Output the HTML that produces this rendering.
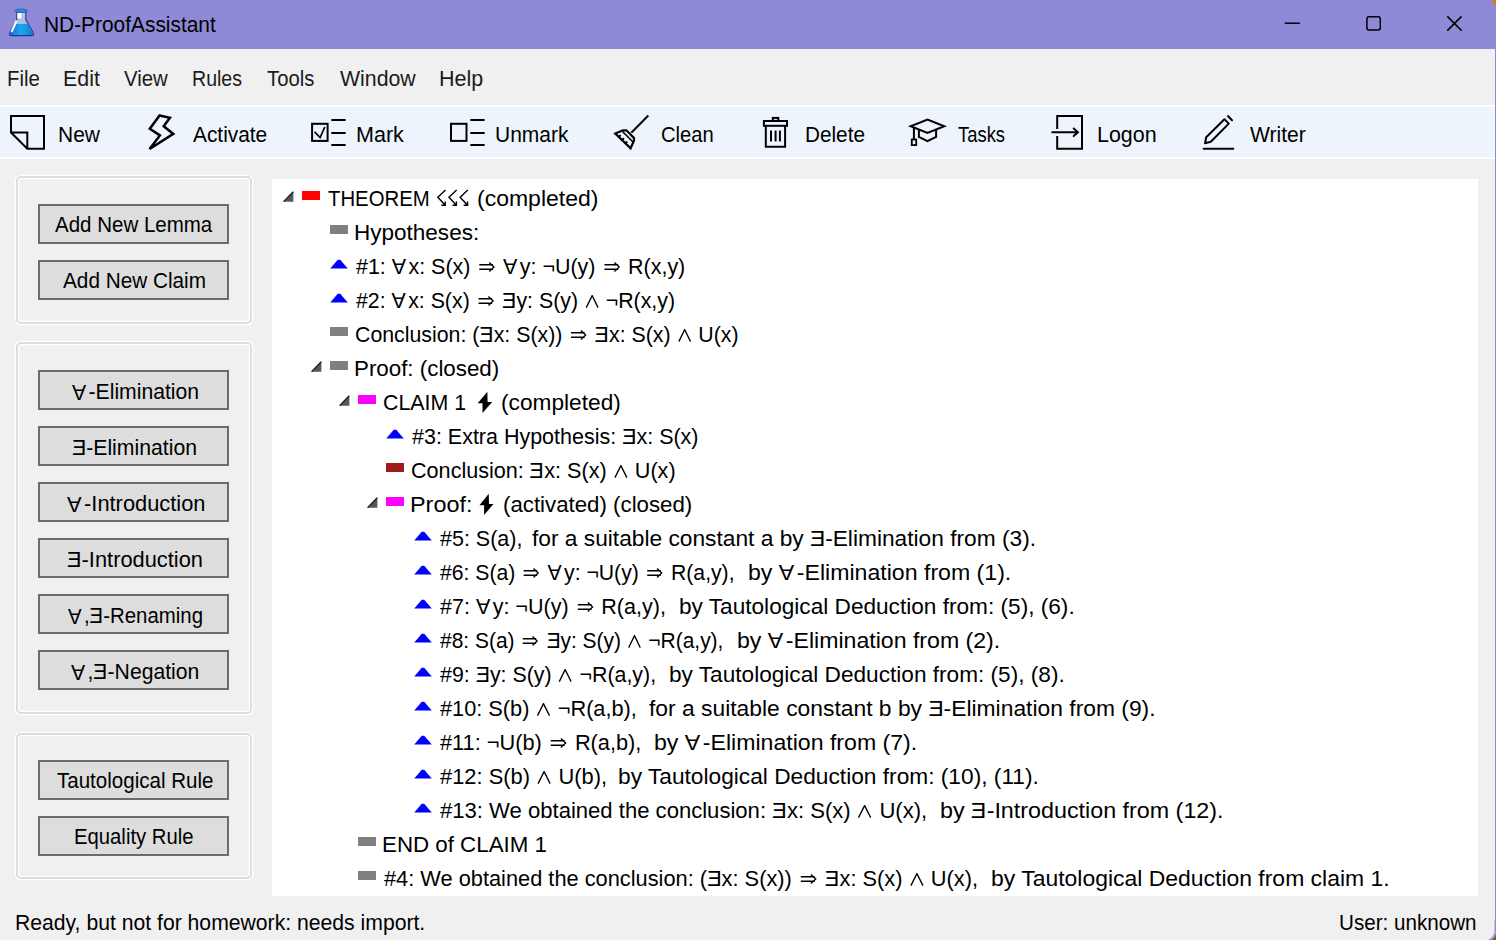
<!DOCTYPE html><html><head><meta charset="utf-8"><style>
html,body{margin:0;padding:0;background:#f0f0f0}
body{width:1496px;height:940px;overflow:hidden;position:relative;background:#f0f0f0;font-family:"Liberation Sans",sans-serif;color:#000}
.ab{position:absolute;display:block}
.tx{position:absolute;white-space:pre;transform-origin:0 0;font-family:"Liberation Sans",sans-serif}
.fa{display:inline-block;transform:scaleY(-1);margin-right:2.5px}
.fe{display:inline-block;transform:scaleX(-1)}
.im{vertical-align:0;display:inline-block}
.wg{vertical-align:0;display:inline-block}
.bz{vertical-align:-3px;display:inline-block}
.tz{vertical-align:-1px;display:inline-block}
.gb{position:absolute;box-sizing:border-box;border:2px solid #d5dfe5;border-radius:5px;box-shadow:0 0 0 1.3px #fff, inset 0 0 0 1.3px #fff}
.btn{position:absolute;left:38px;width:191px;height:40px;box-sizing:border-box;border:2px solid #6b6b6b;background:#dddddd}
</style></head><body>
<div class="ab" style="left:0;top:0;width:1496px;height:48.8px;background:#8e8ad8"></div>
<svg class="ab" style="left:4px;top:4px" width="36" height="36" viewBox="0 0 36 36">
<defs><linearGradient id="lq" x1="0" y1="0" x2="1" y2="0"><stop offset="0" stop-color="#1f6fd6"/><stop offset="0.5" stop-color="#18a8ec"/><stop offset="1" stop-color="#1a73d4"/></linearGradient>
<linearGradient id="gl" x1="0" y1="0" x2="0" y2="1"><stop offset="0" stop-color="#b8c4e8"/><stop offset="1" stop-color="#9fb0dc"/></linearGradient></defs>
<path d="M12.8 8H21.8V15.5L29.2 28.8Q30.4 31.6 27.5 31.6H7.5Q4.6 31.6 5.8 28.8L12.8 15.5Z" fill="url(#gl)" stroke="#23349a" stroke-width="1.1"/>
<path d="M10.4 20H24.2L29 28.9Q30 31 27.5 31H7.5Q5 31 6 28.9Z" fill="url(#lq)"/>
<ellipse cx="17.3" cy="6.7" rx="6.3" ry="1.7" fill="#2d8ad8" stroke="#1f5cb8" stroke-width="0.8"/>
<rect x="13.4" y="9" width="4" height="5.5" fill="#fff"/>
<path d="M12.6 16.5L7.6 27.8" stroke="#fff" stroke-width="2"/>
</svg>
<svg class="ab" style="left:1270px;top:0" width="226" height="48" viewBox="0 0 226 48">
<path d="M14.7 23.2H29.9" stroke="#000" stroke-width="1.5"/>
<rect x="96.9" y="16.7" width="13.4" height="13.3" rx="2.2" fill="none" stroke="#000" stroke-width="1.5"/>
<path d="M177.3 16.4L191.6 30.6M191.6 16.4L177.3 30.6" stroke="#000" stroke-width="1.5"/>
</svg>
<div class="ab" style="left:1494.6px;top:48px;width:1.4px;height:872px;background:#8e8ad8"></div>
<svg class="ab" style="left:1486px;top:0" width="10" height="10" viewBox="0 0 10 10"><path d="M5.5 0H10V5.5Z" fill="#e0741c"/></svg>
<svg class="ab" style="left:1476px;top:920px" width="20" height="20" viewBox="0 0 20 20"><path d="M20 11Q20 17.5 14.5 20H20Z" fill="#8a4a3a"/><path d="M19.3 0V10.5Q19.3 17 13 20" fill="none" stroke="#8e8ad8" stroke-width="1.4"/></svg>
<div class="ab" style="left:0;top:104.6px;width:1494.6px;height:54.4px;background:#fff"></div>
<div class="ab" style="left:0;top:107px;width:1494.6px;height:50.4px;background:#eef4fc"></div>
<svg class="ab" style="left:0;top:107px" width="1300" height="51" viewBox="0 107 1300 51">
<g fill="none" stroke="#000" stroke-width="2">
<path d="M11 116H44V148.8H27.3L11 132.5Z M11 132.5H27.3V148.8"/>
<path d="M159.6 115.5L169.9 117.7L163.7 126.3L173.3 133.9L149.6 149L159.9 135.4L149.8 128.7Z" stroke-width="2.5" stroke-linejoin="miter"/>
<rect x="312.1" y="123.8" width="15.5" height="17.1"/>
<path d="M314.6 131.8L320.1 137.6L324.8 127" stroke-width="1.7"/>
<path d="M332 120H345M332 133H345M332 145H345" stroke-width="1.8" stroke-linecap="round"/>
<rect x="451" y="123.8" width="15.5" height="17.1"/>
<path d="M471 120H484M471 133H484M471 145H484" stroke-width="1.8" stroke-linecap="round"/>
<path d="M631.3 132.7L648.3 115.5" stroke-width="2"/>
<path d="M615.3 133.6L623 130.3H626.3L634 138V140.6L630.6 148.3Z" stroke-width="2.2" stroke-linejoin="miter"/>
<path d="M622.5 131.5L633 142" stroke-width="1.6"/>
<path d="M618.6 137.2L620.6 135.1M621.9 140.4L623.9 138.3M625.2 143.6L627.2 141.5" stroke-width="2"/>
<rect x="763.9" y="121" width="23.1" height="4.8"/>
<rect x="772.8" y="117.9" width="5.5" height="3"/>
<path d="M765.8 125.8V146.8H785.1V125.8"/>
<path d="M771 130.5V141.5M775.6 130.5V141.5M779.9 130.5V141.5" stroke-width="2"/>
<path d="M910.7 126.3L927.5 119.6L944.3 126.3L927.5 132.9Z" stroke-linejoin="miter"/>
<path d="M918.9 129.6V136.8L927.5 141.1L936.1 136.8V129.6"/>
<path d="M913.9 127V139"/>
<rect x="911.8" y="139.5" width="4.4" height="5.6" stroke-width="1.8"/>
<path d="M1057.2 128.9V116H1082V148.7H1057.2V136.1"/>
<path d="M1052.2 132.3H1077.5M1073.7 128.5L1077.9 132.3L1073.7 136.1" stroke-linecap="round"/>
<path d="M1205 143.3L1206.2 137.2L1224.4 119.2L1228.8 123.6L1210.8 141.8Z" stroke-linejoin="round"/>
<path d="M1228 116L1232 120.2" stroke-linecap="round"/>
<path d="M1203.6 148.8H1233.3" stroke-linecap="round"/>
</g></svg>
<div class="gb" style="left:16px;top:176px;width:236px;height:147.5px"></div>
<div class="gb" style="left:16px;top:342.3px;width:236px;height:371.7px"></div>
<div class="gb" style="left:16px;top:732.6px;width:236px;height:146.2px"></div>
<div class="btn" style="top:204px"></div>
<div class="btn" style="top:260px"></div>
<div class="btn" style="top:370px"></div>
<div class="btn" style="top:426px"></div>
<div class="btn" style="top:482px"></div>
<div class="btn" style="top:538px"></div>
<div class="btn" style="top:594px"></div>
<div class="btn" style="top:650px"></div>
<div class="btn" style="top:760px"></div>
<div class="btn" style="top:816px"></div>
<div class="ab" style="left:271.8px;top:178.9px;width:1206px;height:716.8px;background:#fff"></div>
<svg class="ab" style="left:282px;top:189.9px" width="12" height="12" viewBox="0 0 12 12"><path d="M1.3 11.8L11.4 1.5V11.8Z" fill="#585858"/><path d="M1.6 11.6L11.2 1.8" stroke="#1c1c1c" stroke-width="1.3"/></svg>
<div class="ab" style="left:302px;top:191.0px;width:18px;height:9px;background:#ff0000"></div>
<div class="ab" style="left:330px;top:225.0px;width:18px;height:9px;background:#808080"></div>
<svg class="ab" style="left:330px;top:259.0px" width="18" height="10" viewBox="0 0 18 10"><path d="M0.2 9.4L7.8 0.8H10.2L17.8 9.4Z" fill="#0000ff"/></svg>
<svg class="ab" style="left:330px;top:293.0px" width="18" height="10" viewBox="0 0 18 10"><path d="M0.2 9.4L7.8 0.8H10.2L17.8 9.4Z" fill="#0000ff"/></svg>
<div class="ab" style="left:330px;top:327.0px;width:18px;height:9px;background:#808080"></div>
<svg class="ab" style="left:310px;top:359.9px" width="12" height="12" viewBox="0 0 12 12"><path d="M1.3 11.8L11.4 1.5V11.8Z" fill="#585858"/><path d="M1.6 11.6L11.2 1.8" stroke="#1c1c1c" stroke-width="1.3"/></svg>
<div class="ab" style="left:330px;top:361.0px;width:18px;height:9px;background:#808080"></div>
<svg class="ab" style="left:338px;top:393.9px" width="12" height="12" viewBox="0 0 12 12"><path d="M1.3 11.8L11.4 1.5V11.8Z" fill="#585858"/><path d="M1.6 11.6L11.2 1.8" stroke="#1c1c1c" stroke-width="1.3"/></svg>
<div class="ab" style="left:358px;top:395.0px;width:18px;height:9px;background:#ff00ff"></div>
<svg class="ab" style="left:386px;top:429.0px" width="18" height="10" viewBox="0 0 18 10"><path d="M0.2 9.4L7.8 0.8H10.2L17.8 9.4Z" fill="#0000ff"/></svg>
<div class="ab" style="left:386px;top:463.0px;width:18px;height:9px;background:#a31a1a"></div>
<svg class="ab" style="left:366px;top:495.9px" width="12" height="12" viewBox="0 0 12 12"><path d="M1.3 11.8L11.4 1.5V11.8Z" fill="#585858"/><path d="M1.6 11.6L11.2 1.8" stroke="#1c1c1c" stroke-width="1.3"/></svg>
<div class="ab" style="left:386px;top:497.0px;width:18px;height:9px;background:#ff00ff"></div>
<svg class="ab" style="left:414px;top:531.0px" width="18" height="10" viewBox="0 0 18 10"><path d="M0.2 9.4L7.8 0.8H10.2L17.8 9.4Z" fill="#0000ff"/></svg>
<svg class="ab" style="left:414px;top:565.0px" width="18" height="10" viewBox="0 0 18 10"><path d="M0.2 9.4L7.8 0.8H10.2L17.8 9.4Z" fill="#0000ff"/></svg>
<svg class="ab" style="left:414px;top:599.0px" width="18" height="10" viewBox="0 0 18 10"><path d="M0.2 9.4L7.8 0.8H10.2L17.8 9.4Z" fill="#0000ff"/></svg>
<svg class="ab" style="left:414px;top:633.0px" width="18" height="10" viewBox="0 0 18 10"><path d="M0.2 9.4L7.8 0.8H10.2L17.8 9.4Z" fill="#0000ff"/></svg>
<svg class="ab" style="left:414px;top:667.0px" width="18" height="10" viewBox="0 0 18 10"><path d="M0.2 9.4L7.8 0.8H10.2L17.8 9.4Z" fill="#0000ff"/></svg>
<svg class="ab" style="left:414px;top:701.0px" width="18" height="10" viewBox="0 0 18 10"><path d="M0.2 9.4L7.8 0.8H10.2L17.8 9.4Z" fill="#0000ff"/></svg>
<svg class="ab" style="left:414px;top:735.0px" width="18" height="10" viewBox="0 0 18 10"><path d="M0.2 9.4L7.8 0.8H10.2L17.8 9.4Z" fill="#0000ff"/></svg>
<svg class="ab" style="left:414px;top:769.0px" width="18" height="10" viewBox="0 0 18 10"><path d="M0.2 9.4L7.8 0.8H10.2L17.8 9.4Z" fill="#0000ff"/></svg>
<svg class="ab" style="left:414px;top:803.0px" width="18" height="10" viewBox="0 0 18 10"><path d="M0.2 9.4L7.8 0.8H10.2L17.8 9.4Z" fill="#0000ff"/></svg>
<div class="ab" style="left:358px;top:837.0px;width:18px;height:9px;background:#808080"></div>
<div class="ab" style="left:358px;top:871.0px;width:18px;height:9px;background:#808080"></div>
<div class="tx" id="title" style="left:43.72px;top:14.80px;font-size:21.5px;line-height:21.5px;color:#000;transform:scaleX(0.9713)">ND-ProofAssistant</div>
<div class="tx" id="m0" style="left:6.59px;top:68.18px;font-size:22px;line-height:22px;color:#1b1b1b;transform:scaleX(0.9244)">File</div>
<div class="tx" id="m1" style="left:62.55px;top:68.18px;font-size:22px;line-height:22px;color:#1b1b1b;transform:scaleX(0.9726)">Edit</div>
<div class="tx" id="m2" style="left:124.31px;top:68.18px;font-size:22px;line-height:22px;color:#1b1b1b;transform:scaleX(0.9257)">View</div>
<div class="tx" id="m3" style="left:192.07px;top:68.18px;font-size:22px;line-height:22px;color:#1b1b1b;transform:scaleX(0.8891)">Rules</div>
<div class="tx" id="m4" style="left:266.91px;top:68.18px;font-size:22px;line-height:22px;color:#1b1b1b;transform:scaleX(0.9217)">Tools</div>
<div class="tx" id="m5" style="left:339.71px;top:68.18px;font-size:22px;line-height:22px;color:#1b1b1b;transform:scaleX(0.9679)">Window</div>
<div class="tx" id="m6" style="left:439.34px;top:68.18px;font-size:22px;line-height:22px;color:#1b1b1b;transform:scaleX(0.9770)">Help</div>
<div class="tx" id="t0" style="left:57.79px;top:123.68px;font-size:22px;line-height:22px;color:#000;transform:scaleX(0.9524)">New</div>
<div class="tx" id="t1" style="left:193.09px;top:123.68px;font-size:22px;line-height:22px;color:#000;transform:scaleX(0.9481)">Activate</div>
<div class="tx" id="t2" style="left:356.34px;top:123.68px;font-size:22px;line-height:22px;color:#000;transform:scaleX(0.9789)">Mark</div>
<div class="tx" id="t3" style="left:495.19px;top:123.68px;font-size:22px;line-height:22px;color:#000;transform:scaleX(0.9533)">Unmark</div>
<div class="tx" id="t4" style="left:660.99px;top:123.68px;font-size:22px;line-height:22px;color:#000;transform:scaleX(0.9184)">Clean</div>
<div class="tx" id="t5" style="left:804.58px;top:123.68px;font-size:22px;line-height:22px;color:#000;transform:scaleX(0.9427)">Delete</div>
<div class="tx" id="t6" style="left:958.41px;top:123.68px;font-size:22px;line-height:22px;color:#000;transform:scaleX(0.8365)">Tasks</div>
<div class="tx" id="t7" style="left:1096.51px;top:123.68px;font-size:22px;line-height:22px;color:#000;transform:scaleX(0.9748)">Logon</div>
<div class="tx" id="t8" style="left:1249.52px;top:123.68px;font-size:22px;line-height:22px;color:#000;transform:scaleX(0.9570)">Writer</div>
<div class="tx" id="b0" style="left:55.09px;top:214.48px;font-size:22px;line-height:22px;color:#000;transform:scaleX(0.9319)">Add New Lemma</div>
<div class="tx" id="b1" style="left:63.09px;top:270.48px;font-size:22px;line-height:22px;color:#000;transform:scaleX(0.9432)">Add New Claim</div>
<div class="tx" id="b2" style="left:72.10px;top:380.58px;font-size:22px;line-height:22px;color:#000;transform:scaleX(0.9619)"><span class="fa">A</span>-Elimination</div>
<div class="tx" id="b3" style="left:71.92px;top:436.58px;font-size:22px;line-height:22px;color:#000;transform:scaleX(0.9646)"><span class="fe">E</span>-Elimination</div>
<div class="tx" id="b4" style="left:66.70px;top:492.58px;font-size:22px;line-height:22px;color:#000;transform:scaleX(0.9928)"><span class="fa">A</span>-Introduction</div>
<div class="tx" id="b5" style="left:66.91px;top:548.58px;font-size:22px;line-height:22px;color:#000;transform:scaleX(0.9926)"><span class="fe">E</span>-Introduction</div>
<div class="tx" id="b6" style="left:67.94px;top:604.58px;font-size:22px;line-height:22px;color:#000;transform:scaleX(0.9272)"><span class="fa">A</span>,<span class="fe">E</span>-Renaming</div>
<div class="tx" id="b7" style="left:71.10px;top:660.58px;font-size:22px;line-height:22px;color:#000;transform:scaleX(0.9622)"><span class="fa">A</span>,<span class="fe">E</span>-Negation</div>
<div class="tx" id="b8" style="left:56.75px;top:770.48px;font-size:22px;line-height:22px;color:#000;transform:scaleX(0.9338)">Tautological Rule</div>
<div class="tx" id="b9" style="left:74.39px;top:826.48px;font-size:22px;line-height:22px;color:#000;transform:scaleX(0.9220)">Equality Rule</div>
<div class="tx" id="s0" style="left:14.55px;top:911.58px;font-size:22px;line-height:22px;color:#000;transform:scaleX(0.9622)">Ready, but not for homework: needs import.</div>
<div class="tx" id="s1" style="left:1338.99px;top:911.58px;font-size:22px;line-height:22px;color:#000;transform:scaleX(0.9375)">User: unknown</div>
<div class="tx" id="r0" style="left:328.33px;top:187.00px;font-size:22.8px;line-height:22.8px;color:#000;transform:scaleX(0.8919)">THEOREM</div>
<div class="tx" id="r0_1" style="left:434.42px;top:187.00px;font-size:22.8px;line-height:22.8px;color:#000;transform:scaleX(1.0050)"><svg class="tz" width="37" height="18" viewBox="0 0 37 18"><path d="M11.4 1L3.8 8.2L11.2 16.3M7.3 16.3H11.2V12.4" fill="none" stroke="#000" stroke-width="1.4"/><path d="M22.5 1L14.9 8.2L22.299999999999997 16.3M18.4 16.3H22.299999999999997V12.4" fill="none" stroke="#000" stroke-width="1.4"/><path d="M33.6 1L26.0 8.2L33.4 16.3M29.5 16.3H33.4V12.4" fill="none" stroke="#000" stroke-width="1.4"/></svg></div>
<div class="tx" id="r0_2" style="left:477.49px;top:187.00px;font-size:22.8px;line-height:22.8px;color:#000;transform:scaleX(1.0085)">(completed)</div>
<div class="tx" id="r1" style="left:354.33px;top:221.00px;font-size:22.8px;line-height:22.8px;color:#000;transform:scaleX(0.9878)">Hypotheses:</div>
<div class="tx" id="r2" style="left:356.31px;top:255.00px;font-size:22.8px;line-height:22.8px;color:#000;transform:scaleX(0.9411)">#1: <span class="fa">A</span>x: S(x) <svg class="im" width="22" height="12" viewBox="0 0 22 12"><path d="M3 2.7H17.6M3 7.3H17.6M13.6 0.5L18.6 5L13.6 9.5" fill="none" stroke="#000" stroke-width="1.4"/></svg> <span class="fa">A</span>y: ¬U(y) <svg class="im" width="22" height="12" viewBox="0 0 22 12"><path d="M3 2.7H17.6M3 7.3H17.6M13.6 0.5L18.6 5L13.6 9.5" fill="none" stroke="#000" stroke-width="1.4"/></svg> R(x,y)</div>
<div class="tx" id="r3" style="left:356.31px;top:289.00px;font-size:22.8px;line-height:22.8px;color:#000;transform:scaleX(0.9353)">#2: <span class="fa">A</span>x: S(x) <svg class="im" width="22" height="12" viewBox="0 0 22 12"><path d="M3 2.7H17.6M3 7.3H17.6M13.6 0.5L18.6 5L13.6 9.5" fill="none" stroke="#000" stroke-width="1.4"/></svg> <span class="fe">E</span>y: S(y) <svg class="wg" width="17" height="13" viewBox="0 0 17 13"><path d="M2.2 12.6L8.5 0.6L14.8 12.6" fill="none" stroke="#000" stroke-width="1.4"/></svg> ¬R(x,y)</div>
<div class="tx" id="r4" style="left:355.38px;top:323.00px;font-size:22.8px;line-height:22.8px;color:#000;transform:scaleX(0.9352)">Conclusion: (<span class="fe">E</span>x: S(x)) <svg class="im" width="22" height="12" viewBox="0 0 22 12"><path d="M3 2.7H17.6M3 7.3H17.6M13.6 0.5L18.6 5L13.6 9.5" fill="none" stroke="#000" stroke-width="1.4"/></svg> <span class="fe">E</span>x: S(x) <svg class="wg" width="17" height="13" viewBox="0 0 17 13"><path d="M2.2 12.6L8.5 0.6L14.8 12.6" fill="none" stroke="#000" stroke-width="1.4"/></svg> U(x)</div>
<div class="tx" id="r5" style="left:354.35px;top:357.00px;font-size:22.8px;line-height:22.8px;color:#000;transform:scaleX(0.9795)">Proof: (closed)</div>
<div class="tx" id="r6" style="left:383.37px;top:391.00px;font-size:22.8px;line-height:22.8px;color:#000;transform:scaleX(0.9369)">CLAIM 1</div>
<div class="tx" id="r6_1" style="left:472.03px;top:391.00px;font-size:22.8px;line-height:22.8px;color:#000;transform:scaleX(1.1292)"><svg class="bz" width="22" height="22" viewBox="0 0 22 22"><path d="M13.6 0.7L13.8 11.1H17.9L9.3 21.9V12.2H5Z" fill="#000"/></svg></div>
<div class="tx" id="r6_2" style="left:500.91px;top:391.00px;font-size:22.8px;line-height:22.8px;color:#000;transform:scaleX(0.9956)">(completed)</div>
<div class="tx" id="r7" style="left:412.31px;top:425.00px;font-size:22.8px;line-height:22.8px;color:#000;transform:scaleX(0.9422)">#3: Extra Hypothesis: <span class="fe">E</span>x: S(x)</div>
<div class="tx" id="r8" style="left:411.36px;top:459.00px;font-size:22.8px;line-height:22.8px;color:#000;transform:scaleX(0.9476)">Conclusion: <span class="fe">E</span>x: S(x) <svg class="wg" width="17" height="13" viewBox="0 0 17 13"><path d="M2.2 12.6L8.5 0.6L14.8 12.6" fill="none" stroke="#000" stroke-width="1.4"/></svg> U(x)</div>
<div class="tx" id="r9" style="left:410.24px;top:493.00px;font-size:22.8px;line-height:22.8px;color:#000;transform:scaleX(1.0265)">Proof:</div>
<div class="tx" id="r9_1" style="left:474.17px;top:493.00px;font-size:22.8px;line-height:22.8px;color:#000;transform:scaleX(1.0858)"><svg class="bz" width="22" height="22" viewBox="0 0 22 22"><path d="M13.6 0.7L13.8 11.1H17.9L9.3 21.9V12.2H5Z" fill="#000"/></svg></div>
<div class="tx" id="r9_2" style="left:502.74px;top:493.00px;font-size:22.8px;line-height:22.8px;color:#000;transform:scaleX(0.9764)">(activated) (closed)</div>
<div class="tx" id="r10" style="left:440.31px;top:527.00px;font-size:22.8px;line-height:22.8px;color:#000;transform:scaleX(0.9420)">#5: S(a),</div>
<div class="tx" id="r10_1" style="left:531.90px;top:527.00px;font-size:22.8px;line-height:22.8px;color:#000;transform:scaleX(0.9970)">for a suitable constant a by <span class="fe">E</span>-Elimination from (3).</div>
<div class="tx" id="r11" style="left:440.32px;top:561.00px;font-size:22.8px;line-height:22.8px;color:#000;transform:scaleX(0.9292)">#6: S(a) <svg class="im" width="22" height="12" viewBox="0 0 22 12"><path d="M3 2.7H17.6M3 7.3H17.6M13.6 0.5L18.6 5L13.6 9.5" fill="none" stroke="#000" stroke-width="1.4"/></svg> <span class="fa">A</span>y: ¬U(y) <svg class="im" width="22" height="12" viewBox="0 0 22 12"><path d="M3 2.7H17.6M3 7.3H17.6M13.6 0.5L18.6 5L13.6 9.5" fill="none" stroke="#000" stroke-width="1.4"/></svg> R(a,y),</div>
<div class="tx" id="r11_1" style="left:748.48px;top:561.00px;font-size:22.8px;line-height:22.8px;color:#000;transform:scaleX(1.0138)">by <span class="fa">A</span>-Elimination from (1).</div>
<div class="tx" id="r12" style="left:440.31px;top:595.00px;font-size:22.8px;line-height:22.8px;color:#000;transform:scaleX(0.9441)">#7: <span class="fa">A</span>y: ¬U(y) <svg class="im" width="22" height="12" viewBox="0 0 22 12"><path d="M3 2.7H17.6M3 7.3H17.6M13.6 0.5L18.6 5L13.6 9.5" fill="none" stroke="#000" stroke-width="1.4"/></svg> R(a,y),</div>
<div class="tx" id="r12_1" style="left:678.51px;top:595.00px;font-size:22.8px;line-height:22.8px;color:#000;transform:scaleX(0.9924)">by Tautological Deduction from: (5), (6).</div>
<div class="tx" id="r13" style="left:440.32px;top:629.00px;font-size:22.8px;line-height:22.8px;color:#000;transform:scaleX(0.9195)">#8: S(a) <svg class="im" width="22" height="12" viewBox="0 0 22 12"><path d="M3 2.7H17.6M3 7.3H17.6M13.6 0.5L18.6 5L13.6 9.5" fill="none" stroke="#000" stroke-width="1.4"/></svg> <span class="fe">E</span>y: S(y) <svg class="wg" width="17" height="13" viewBox="0 0 17 13"><path d="M2.2 12.6L8.5 0.6L14.8 12.6" fill="none" stroke="#000" stroke-width="1.4"/></svg> ¬R(a,y),</div>
<div class="tx" id="r13_1" style="left:737.29px;top:629.00px;font-size:22.8px;line-height:22.8px;color:#000;transform:scaleX(1.0136)">by <span class="fa">A</span>-Elimination from (2).</div>
<div class="tx" id="r14" style="left:440.32px;top:663.00px;font-size:22.8px;line-height:22.8px;color:#000;transform:scaleX(0.9376)">#9: <span class="fe">E</span>y: S(y) <svg class="wg" width="17" height="13" viewBox="0 0 17 13"><path d="M2.2 12.6L8.5 0.6L14.8 12.6" fill="none" stroke="#000" stroke-width="1.4"/></svg> ¬R(a,y),</div>
<div class="tx" id="r14_1" style="left:668.84px;top:663.00px;font-size:22.8px;line-height:22.8px;color:#000;transform:scaleX(0.9926)">by Tautological Deduction from: (5), (8).</div>
<div class="tx" id="r15" style="left:440.31px;top:697.00px;font-size:22.8px;line-height:22.8px;color:#000;transform:scaleX(0.9537)">#10: S(b) <svg class="wg" width="17" height="13" viewBox="0 0 17 13"><path d="M2.2 12.6L8.5 0.6L14.8 12.6" fill="none" stroke="#000" stroke-width="1.4"/></svg> ¬R(a,b),</div>
<div class="tx" id="r15_1" style="left:648.90px;top:697.00px;font-size:22.8px;line-height:22.8px;color:#000;transform:scaleX(1.0020)">for a suitable constant b by <span class="fe">E</span>-Elimination from (9).</div>
<div class="tx" id="r16" style="left:440.31px;top:731.00px;font-size:22.8px;line-height:22.8px;color:#000;transform:scaleX(0.9546)">#11: ¬U(b) <svg class="im" width="22" height="12" viewBox="0 0 22 12"><path d="M3 2.7H17.6M3 7.3H17.6M13.6 0.5L18.6 5L13.6 9.5" fill="none" stroke="#000" stroke-width="1.4"/></svg> R(a,b),</div>
<div class="tx" id="r16_1" style="left:653.67px;top:731.00px;font-size:22.8px;line-height:22.8px;color:#000;transform:scaleX(1.0136)">by <span class="fa">A</span>-Elimination from (7).</div>
<div class="tx" id="r17" style="left:440.31px;top:765.00px;font-size:22.8px;line-height:22.8px;color:#000;transform:scaleX(0.9593)">#12: S(b) <svg class="wg" width="17" height="13" viewBox="0 0 17 13"><path d="M2.2 12.6L8.5 0.6L14.8 12.6" fill="none" stroke="#000" stroke-width="1.4"/></svg> U(b),</div>
<div class="tx" id="r17_1" style="left:618.30px;top:765.00px;font-size:22.8px;line-height:22.8px;color:#000;transform:scaleX(0.9964)">by Tautological Deduction from: (10), (11).</div>
<div class="tx" id="r18" style="left:440.31px;top:799.00px;font-size:22.8px;line-height:22.8px;color:#000;transform:scaleX(0.9683)">#13: We obtained the conclusion: <span class="fe">E</span>x: S(x) <svg class="wg" width="17" height="13" viewBox="0 0 17 13"><path d="M2.2 12.6L8.5 0.6L14.8 12.6" fill="none" stroke="#000" stroke-width="1.4"/></svg> U(x),</div>
<div class="tx" id="r18_1" style="left:939.71px;top:799.00px;font-size:22.8px;line-height:22.8px;color:#000;transform:scaleX(1.0217)">by <span class="fe">E</span>-Introduction from (12).</div>
<div class="tx" id="r19" style="left:382.33px;top:833.00px;font-size:22.8px;line-height:22.8px;color:#000;transform:scaleX(0.9788)">END of CLAIM 1</div>
<div class="tx" id="r20" style="left:384.31px;top:867.00px;font-size:22.8px;line-height:22.8px;color:#000;transform:scaleX(0.9559)">#4: We obtained the conclusion: (<span class="fe">E</span>x: S(x)) <svg class="im" width="22" height="12" viewBox="0 0 22 12"><path d="M3 2.7H17.6M3 7.3H17.6M13.6 0.5L18.6 5L13.6 9.5" fill="none" stroke="#000" stroke-width="1.4"/></svg> <span class="fe">E</span>x: S(x) <svg class="wg" width="17" height="13" viewBox="0 0 17 13"><path d="M2.2 12.6L8.5 0.6L14.8 12.6" fill="none" stroke="#000" stroke-width="1.4"/></svg> U(x),</div>
<div class="tx" id="r20_1" style="left:991.09px;top:867.00px;font-size:22.8px;line-height:22.8px;color:#000;transform:scaleX(1.0062)">by Tautological Deduction from claim 1.</div>
</body></html>
